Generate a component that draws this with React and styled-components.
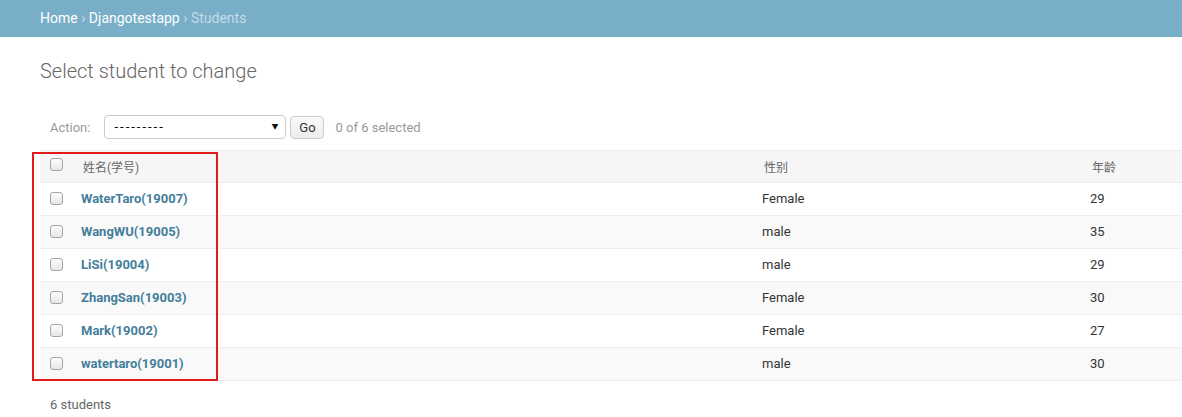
import React from 'react';
import styled, { createGlobalStyle } from 'styled-components';

const GlobalStyle = createGlobalStyle`
  html, body {
    margin: 0;
    padding: 0;
    background: #fff;
  }
  body {
    font-family: Roboto, "Noto Sans CJK SC", "Liberation Sans", sans-serif;
    font-size: 14px;
    color: #333;
  }
`

const Breadcrumbs = styled.div`
  background: #79aec8;
  padding: 10px 40px;
  height: 17px;
  line-height: 17px;
  font-size: 14px;
  color: #c4dce8;
`
const Crumb = styled.a`
  color: #fff;
  text-decoration: none;
`

const Content = styled.div`
  padding: 22px 0 0 40px;
`
const Title = styled.h1`
  margin: 0 0 32px;
  font-size: 20px;
  line-height: 24px;
  font-weight: 300;
  color: #666;
`

const Actions = styled.div`
  display: flex;
  align-items: center;
  height: 24px;
  padding: 0 10px;
  margin-bottom: 11px;
  font-size: 13px;
  color: #999;
`
const ActionLabel = styled.label`
  margin-right: 14px;
`
const SelectBox = styled.div`
  position: relative;
  box-sizing: border-box;
  width: 182px;
  height: 24px;
  border: 1px solid #ccc;
  border-radius: 4px;
  padding: 0 9px;
  line-height: 22px;
  font-size: 13px;
  letter-spacing: 2px;
  color: #000;
  margin-right: 4px;
  &::after {
    content: '▼';
    position: absolute;
    right: 7px;
    top: 0;
    font-size: 7px;
    letter-spacing: 0;
    color: #111;
  }
`
const GoButton = styled.button`
  box-sizing: border-box;
  width: 34px;
  height: 23px;
  padding: 0;
  border: 1px solid #ccc;
  border-radius: 4px;
  background: linear-gradient(#fafafa, #ececec);
  font-family: inherit;
  font-size: 13px;
  color: #333;
  margin-right: 11px;
`

const TableWrap = styled.div`
  position: relative;
`
const Table = styled.table`
  width: 100%;
  border-collapse: collapse;
  border-bottom: 1px solid #ddd;
  font-size: 13px;
`
const HeadCell = styled.th`
  height: 32px;
  box-sizing: border-box;
  padding: 0 10px;
  background: #f6f6f6;
  border-top: 1px solid #eee;
  border-bottom: 1px solid #eee;
  text-align: left;
  font-size: 12px;
  font-weight: 400;
  color: #666;
  width: ${p => p.$width || 'auto'};
  vertical-align: middle;
`
const Row = styled.tr`
  background: ${p => (p.$alt ? '#f9f9f9' : '#fff')};
`
const Cell = styled.td`
  padding: 8px 8px;
  line-height: 16px;
  border-bottom: 1px solid #eee;
  color: #333;
  vertical-align: middle;
`
const CheckCell = styled.td`
  padding: 0 0 0 10px;
  border-bottom: 1px solid #eee;
  vertical-align: middle;
`
const NameCell = styled.th`
  padding: 8px 8px;
  line-height: 16px;
  border-bottom: 1px solid #eee;
  text-align: left;
  font-weight: 700;
  vertical-align: middle;
`
const NameLink = styled.a`
  color: #447e9b;
  text-decoration: none;
`
const Check = styled.input.attrs({ type: 'checkbox' })`
  appearance: none;
  display: block;
  box-sizing: border-box;
  width: 13px;
  height: 13px;
  margin: ${p => (p.$head ? '-4px 0 0' : '-2px 0 0')};
  border: 1px solid #a6a6a6;
  border-radius: 3px;
  background: linear-gradient(#fdfdfd, #e6e6e6);
`

const Highlight = styled.div`
  position: absolute;
  left: -8px;
  top: 2px;
  width: 186px;
  height: 229px;
  box-sizing: border-box;
  border: 2px solid #e01b1b;
  pointer-events: none;
`

const Paginator = styled.p`
  margin: 16px 0 0;
  padding-left: 10px;
  font-size: 13px;
  color: #666;
`

const students = [
  { name: 'WaterTaro(19007)', gender: 'Female', age: 29 },
  { name: 'WangWU(19005)', gender: 'male', age: 35 },
  { name: 'LiSi(19004)', gender: 'male', age: 29 },
  { name: 'ZhangSan(19003)', gender: 'Female', age: 30 },
  { name: 'Mark(19002)', gender: 'Female', age: 27 },
  { name: 'watertaro(19001)', gender: 'male', age: 30 },
]

function App() {
  return (
    <>
      <GlobalStyle />
      <Breadcrumbs>
        <Crumb href="#">Home</Crumb> › <Crumb href="#">Djangotestapp</Crumb> › Students
      </Breadcrumbs>
      <Content>
        <Title>Select student to change</Title>
        <Actions>
          <ActionLabel>Action:</ActionLabel>
          <SelectBox>---------</SelectBox>
          <GoButton>Go</GoButton>
          <span>0 of 6 selected</span>
        </Actions>
        <TableWrap>
          <Table>
            <thead>
              <tr>
                <HeadCell $width="33px"><Check $head /></HeadCell>
                <HeadCell $width="681px">姓名(学号)</HeadCell>
                <HeadCell $width="328px">性别</HeadCell>
                <HeadCell>年龄</HeadCell>
              </tr>
            </thead>
            <tbody>
              {students.map((s, i) => (
                <Row key={s.name} $alt={i % 2 === 1}>
                  <CheckCell><Check /></CheckCell>
                  <NameCell><NameLink href="#">{s.name}</NameLink></NameCell>
                  <Cell>{s.gender}</Cell>
                  <Cell>{s.age}</Cell>
                </Row>
              ))}
            </tbody>
          </Table>
          <Highlight />
        </TableWrap>
        <Paginator>{students.length} students</Paginator>
      </Content>
    </>
  )
}

export default App
